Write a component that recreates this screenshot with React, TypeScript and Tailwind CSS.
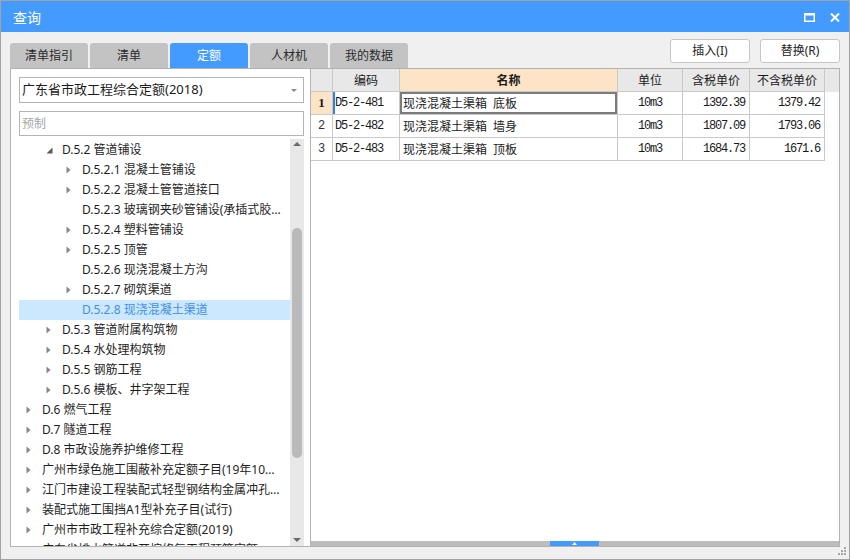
import React from "react";

const ui = "font-[family-name:'Noto_Sans','Noto_Sans_CJK_SC',sans-serif]";
const cjk = "font-[family-name:'Noto_Sans_CJK_SC',sans-serif]";
const mono = "font-[family-name:'Liberation_Mono',monospace]";

type TreeNode = { lv: 1 | 2 | 3; t: string; arrow?: "open" | "closed"; sel?: boolean };

const indent = { 1: "pl-[7px]", 2: "pl-[27px]", 3: "pl-[47px]" };

const tree: TreeNode[] = [
  { lv: 2, t: "D.5.2 管道铺设", arrow: "open" },
  { lv: 3, t: "D.5.2.1 混凝土管铺设", arrow: "closed" },
  { lv: 3, t: "D.5.2.2 混凝土管管道接口", arrow: "closed" },
  { lv: 3, t: "D.5.2.3 玻璃钢夹砂管铺设(承插式胶圈接口)" },
  { lv: 3, t: "D.5.2.4 塑料管铺设", arrow: "closed" },
  { lv: 3, t: "D.5.2.5 顶管", arrow: "closed" },
  { lv: 3, t: "D.5.2.6 现浇混凝土方沟" },
  { lv: 3, t: "D.5.2.7 砌筑渠道", arrow: "closed" },
  { lv: 3, t: "D.5.2.8 现浇混凝土渠道", sel: true },
  { lv: 2, t: "D.5.3 管道附属构筑物", arrow: "closed" },
  { lv: 2, t: "D.5.4 水处理构筑物", arrow: "closed" },
  { lv: 2, t: "D.5.5 钢筋工程", arrow: "closed" },
  { lv: 2, t: "D.5.6 模板、井字架工程", arrow: "closed" },
  { lv: 1, t: "D.6 燃气工程", arrow: "closed" },
  { lv: 1, t: "D.7 隧道工程", arrow: "closed" },
  { lv: 1, t: "D.8 市政设施养护维修工程", arrow: "closed" },
  { lv: 1, t: "广州市绿色施工围蔽补充定额子目(19年10月发布)", arrow: "closed" },
  { lv: 1, t: "江门市建设工程装配式轻型钢结构金属冲孔板围挡", arrow: "closed" },
  { lv: 1, t: "装配式施工围挡A1型补充子目(试行)", arrow: "closed" },
  { lv: 1, t: "广州市市政工程补充综合定额(2019)", arrow: "closed" },
  { lv: 1, t: "广东省排水管道非开挖修复工程预算定额", arrow: "closed" },
];

const tabs = ["清单指引", "清单", "定额", "人材机", "我的数据"];

const rows = [
  { n: "1", code: "D5-2-481", name: "现浇混凝土渠箱\u2002底板", unit: "10m3", tax: "1392.39", notax: "1379.42" },
  { n: "2", code: "D5-2-482", name: "现浇混凝土渠箱\u2002墙身", unit: "10m3", tax: "1807.09", notax: "1793.06" },
  { n: "3", code: "D5-2-483", name: "现浇混凝土渠箱\u2002顶板", unit: "10m3", tax: "1684.73", notax: "1671.6" },
];

const cell = "h-[23px] border-r border-b border-[#c9c9c9] flex items-center shrink-0";
const num = "text-[12px] tracking-[-1.2px]";

function TreeRow({ n }: { n: TreeNode }) {
  return (
    <div
      className={`flex h-[20px] items-center ${indent[n.lv]} ${
        n.sel ? "bg-[#cce8ff] text-[#3f8fe8]" : "text-[#1e1e1e]"
      }`}
    >
      <span className="w-[16px] h-[20px] flex items-center shrink-0">
        {n.arrow === "closed" && (
          <svg width="5" height="8" viewBox="0 0 5 8">
            <path d="M0.5 0.5 L4.5 4 L0.5 7.5 Z" fill="#858585" />
          </svg>
        )}
        {n.arrow === "open" && (
          <svg width="7" height="7" viewBox="0 0 7 7" className="mt-[1px]">
            <path d="M6.5 0.5 L6.5 6.5 L0.5 6.5 Z" fill="#595959" />
          </svg>
        )}
      </span>
      <span className="truncate pr-[6px] text-[12px] leading-[20px]">{n.t}</span>
    </div>
  );
}

export default function App() {
  return (
    <div className={`w-[850px] h-[560px] bg-white ${ui}`}>
      <div className="relative w-[850px] h-[560px] border border-[#a3a3a3] bg-[#f0f0f0] flex flex-col">
        {/* title bar */}
        <div className="h-[31px] bg-[#439aff] flex items-center pl-[12px] pr-[9px] shrink-0">
          <span className="text-white text-[14px] mt-[1px]">查询</span>
          <div className="ml-auto flex items-center gap-[15px] mt-[1px]">
            <svg width="11" height="9" viewBox="0 0 11 9">
              <rect x="0" y="0" width="11" height="2.5" fill="white" />
              <rect x="0.75" y="1" width="9.5" height="7.25" stroke="white" strokeWidth="1.5" fill="none" />
            </svg>
            <svg width="10" height="9" viewBox="0 0 10 9">
              <path d="M1 0.5 L9 8.5 M9 0.5 L1 8.5" stroke="white" strokeWidth="2" />
            </svg>
          </div>
        </div>

        {/* tabs + buttons */}
        <div className="h-[36px] flex px-[9px] shrink-0">
          <div className="flex gap-[2px] self-end">
            {tabs.map((t) => (
              <div
                key={t}
                className={`w-[78px] h-[25px] rounded-t-[3px] flex items-center justify-center text-[12px] ${
                  t === "定额" ? "bg-[#439aff] text-white" : "bg-[#c3c3c3] text-[#2a2a2a]"
                }`}
              >
                {t}
              </div>
            ))}
          </div>
          <div className="ml-auto flex gap-[10px] mt-[7px]">
            <button className="w-[80px] h-[24px] bg-white border border-[#c6c6c6] rounded-[3px] text-[12px] text-[#222]">
              插入(I)
            </button>
            <button className="w-[80px] h-[24px] bg-white border border-[#c6c6c6] rounded-[3px] text-[12px] text-[#222]">
              替换(R)
            </button>
          </div>
        </div>

        {/* panels */}
        <div className="h-[479px] flex px-[9px] shrink-0">
          {/* left */}
          <div className="w-[301px] h-full border border-[#b2b2b2] bg-white flex flex-col pl-[8px] pr-[6px] pt-[8px]">
            <div className="h-[26px] border border-[#b4b4b4] flex items-center pl-[2px] pr-[6px] shrink-0">
              <span className="text-[13px] text-[#1a1a1a]">广东省市政工程综合定额(2018)</span>
              <svg width="6" height="3" viewBox="0 0 6 3" className="ml-auto">
                <path d="M0 0 L6 0 L3 3 Z" fill="#8a8a8a" />
              </svg>
            </div>
            <div className="h-[25px] mt-[8px] border border-[#b4b4b4] flex items-center pl-[2px] shrink-0">
              <span className="text-[12px] text-[#a6a6a6]">预制</span>
            </div>
            <div className="mt-[3px] flex-1 min-h-0 flex">
              <div className="flex-1 min-w-0 overflow-hidden pt-[1px]">
                {tree.map((n) => (
                  <TreeRow key={n.t} n={n} />
                ))}
              </div>
              <div className="w-[14px] h-full bg-[#e8e8e8] flex flex-col items-center shrink-0">
                <svg width="8" height="4" viewBox="0 0 8 4" className="mt-[3px]">
                  <path d="M0 4 L4 0 L8 4 Z" fill="#6a6a6a" />
                </svg>
                <div className="w-[10px] h-[230px] mt-[82px] rounded-full bg-[#bababa]" />
                <svg width="8" height="4" viewBox="0 0 8 4" className="mt-auto mb-[4px]">
                  <path d="M0 0 L8 0 L4 4 Z" fill="#6a6a6a" />
                </svg>
              </div>
            </div>
          </div>

          {/* right */}
          <div className="w-[529px] h-full border-t border-r border-b border-[#b2b2b2] bg-white flex flex-col">
            <div className={`flex flex-col text-[12px] text-[#1a1a1a] ${cjk}`}>
              <div className="flex bg-[#e8e8e8]">
                <div className={`${cell} w-[22px]`} />
                <div className={`${cell} w-[67px] justify-center`}>编码</div>
                <div className={`${cell} w-[218px] justify-center bg-[#fde4c6] font-bold`}>名称</div>
                <div className={`${cell} w-[65px] justify-center`}>单位</div>
                <div className={`${cell} w-[67px] justify-center`}>含税单价</div>
                <div className={`${cell} w-[75px] justify-center`}>不含税单价</div>
              </div>
              {rows.map((r, i) => (
                <div key={r.n} className="flex">
                  <div
                    className={`${cell} w-[22px] justify-center ${
                      i === 0
                        ? "bg-[#fde4c6] font-bold text-[13px] font-[family-name:'Liberation_Serif',serif]"
                        : `${mono} text-[12px] text-[#333]`
                    }`}
                  >
                    {r.n}
                  </div>
                  <div
                    className={`${cell} w-[67px] pl-[2px] ${mono} ${num} ${
                      i === 0 ? "shadow-[inset_2px_0_0_#2f7ff0]" : ""
                    }`}
                  >
                    {r.code}
                  </div>
                  <div
                    className={`${cell} w-[218px] pl-[3px] ${
                      i === 0 ? "shadow-[inset_0_0_0_2px_#7b7b7b]" : ""
                    }`}
                  >
                    {r.name}
                  </div>
                  <div className={`${cell} w-[65px] justify-center ${mono} ${num}`}>{r.unit}</div>
                  <div className={`${cell} w-[67px] justify-end pr-[4px] ${mono} ${num}`}>{r.tax}</div>
                  <div className={`${cell} w-[75px] justify-end pr-[4px] ${mono} ${num}`}>{r.notax}</div>
                </div>
              ))}
            </div>
            <div className="flex-1" />
            <div className="h-[5px] bg-[#bcbcbc] flex">
              <div className="ml-[239px] w-[49px] h-full bg-[#439aff] flex items-center justify-center">
                <svg width="5" height="3" viewBox="0 0 5 3">
                  <path d="M0 3 L2.5 0 L5 3 Z" fill="white" />
                </svg>
              </div>
            </div>
          </div>
        </div>

        {/* resize grip */}
        <svg width="9" height="9" viewBox="0 0 9 9" className="absolute right-[2px] bottom-[3px]">
          <rect x="6" y="0" width="2" height="2" fill="#a8a8a8" />
          <rect x="3" y="3" width="2" height="2" fill="#a8a8a8" />
          <rect x="6" y="3" width="2" height="2" fill="#a8a8a8" />
          <rect x="0" y="6" width="2" height="2" fill="#a8a8a8" />
          <rect x="3" y="6" width="2" height="2" fill="#a8a8a8" />
          <rect x="6" y="6" width="2" height="2" fill="#a8a8a8" />
        </svg>
      </div>
    </div>
  );
}
